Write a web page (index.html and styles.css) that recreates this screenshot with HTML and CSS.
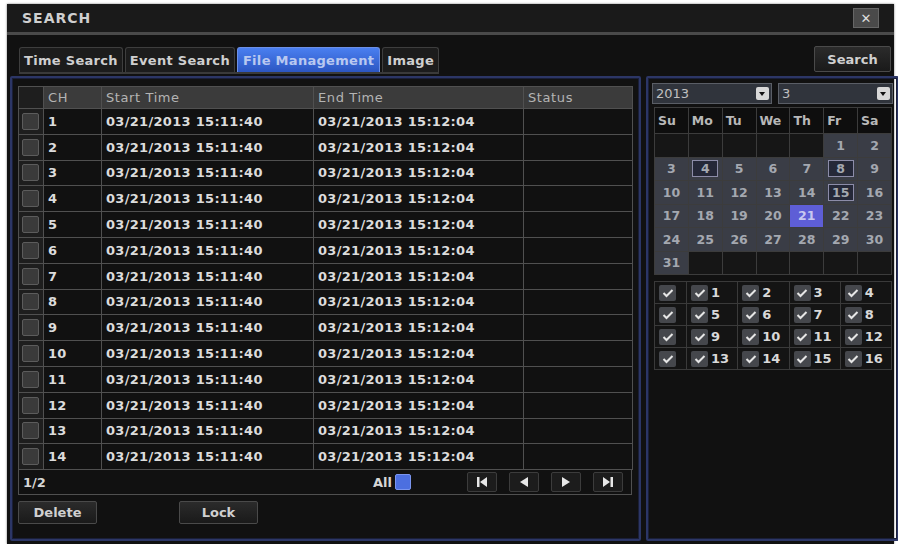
FILE: index.html
```html
<!DOCTYPE html>
<html lang="en">
<head>
    <meta charset="UTF-8">
    <title>SEARCH</title>
    <link rel="stylesheet" href="styles.css">
</head>
<body>
    <div class="window">
        <div class="titlebar">
            <span class="title">SEARCH</span>
            <span class="close">&#x2715;</span>
        </div>
        <div class="toolbar">
            <div class="tabs">
                <span class="tab">Time Search</span>
                <span class="tab">Event Search</span>
                <span class="tab active">File Management</span>
                <span class="tab">Image</span>
            </div>
            <span class="btn search-btn">Search</span>
        </div>
        <div class="main">
            <div class="panel left">
                <table class="files">
                    <thead>
                        <tr>
                            <th class="c-chk"></th>
                            <th class="c-ch">CH</th>
                            <th class="c-start">Start Time</th>
                            <th class="c-end">End Time</th>
                            <th class="c-status">Status</th>
                        </tr>
                    </thead>
                    <tbody id="rows"></tbody>
                </table>
                <div class="pager">
                    <span class="page">1/2</span>
                    <span class="all">All <span class="all-box"></span></span>
                    <div class="nav">
                        <span class="nav-btn"><svg width="14" height="12" viewBox="0 0 14 12"><rect x="2" y="1" width="2.5" height="10" fill="#e8e8e8"/><path d="M12 1 L5 6 L12 11 Z" fill="#e8e8e8"/></svg></span>
                        <span class="nav-btn"><svg width="14" height="12" viewBox="0 0 14 12"><path d="M11 1 L3 6 L11 11 Z" fill="#e8e8e8"/></svg></span>
                        <span class="nav-btn"><svg width="14" height="12" viewBox="0 0 14 12"><path d="M3 1 L11 6 L3 11 Z" fill="#e8e8e8"/></svg></span>
                        <span class="nav-btn"><svg width="14" height="12" viewBox="0 0 14 12"><path d="M2 1 L9 6 L2 11 Z" fill="#e8e8e8"/><rect x="9.5" y="1" width="2.5" height="10" fill="#e8e8e8"/></svg></span>
                    </div>
                </div>
                <div class="actions">
                    <span class="btn action">Delete</span>
                    <span class="btn action">Lock</span>
                </div>
            </div>
            <div class="panel right">
                <div class="selects">
                    <div class="select year"><span>2013</span><span class="drop"></span></div>
                    <div class="select month"><span>3</span><span class="drop"></span></div>
                </div>
                <table class="calendar">
                    <thead>
                        <tr><th>Su</th><th>Mo</th><th>Tu</th><th>We</th><th>Th</th><th>Fr</th><th>Sa</th></tr>
                    </thead>
                    <tbody id="days"></tbody>
                </table>
                <table class="channels">
                    <tbody id="channels"></tbody>
                </table>
            </div>
        </div>
    </div>
    <script>
        // file list rows
        const rows = document.getElementById('rows');
        for (let i = 1; i <= 14; i++) {
            const tr = document.createElement('tr');
            tr.innerHTML = '<td class="c-chk"><span class="box"></span></td>' +
                '<td>' + i + '</td>' +
                '<td>03/21/2013 15:11:40</td>' +
                '<td>03/21/2013 15:12:04</td>' +
                '<td></td>';
            rows.appendChild(tr);
        }

        // March 2013 starts on a Friday
        const days = document.getElementById('days');
        const marked = [4, 8, 15];
        let day = 1 - 5;
        for (let w = 0; w < 6; w++) {
            const tr = document.createElement('tr');
            for (let d = 0; d < 7; d++, day++) {
                const td = document.createElement('td');
                if (day >= 1 && day <= 31) {
                    td.className = 'day';
                    if (day === 21) {
                        td.className += ' today';
                        td.textContent = day;
                    } else if (marked.includes(day)) {
                        td.innerHTML = '<span class="mark">' + day + '</span>';
                    } else {
                        td.textContent = day;
                    }
                }
                tr.appendChild(td);
            }
            days.appendChild(tr);
        }

        // channel checkboxes
        const channels = document.getElementById('channels');
        const tick = '<span class="tick"><svg width="12" height="10" viewBox="0 0 12 10"><path d="M1.5 5 L4.5 8 L10.5 2" fill="none" stroke="#e6e6e6" stroke-width="2"/></svg></span>';
        for (let r = 0; r < 4; r++) {
            const tr = document.createElement('tr');
            let html = '<td class="row-all">' + tick + '</td>';
            for (let c = 1; c <= 4; c++) {
                html += '<td>' + tick + '<span class="num">' + (r * 4 + c) + '</span></td>';
            }
            tr.innerHTML = html;
            channels.appendChild(tr);
        }
    </script>
</body>
</html>
```

FILE: styles.css
```css
* {
    box-sizing: border-box;
}
body {
    margin: 0;
    background: #fff;
    font-family: 'DejaVu Sans', Verdana, sans-serif;
    font-size: 13px;
    color: #d6d6d6;
}
.window {
    margin: 4px 0 0 7px;
    width: 887px;
    height: 540px;
    background: #111;
    display: flex;
    flex-direction: column;
    box-shadow: 0 0 2px #777;
}
.titlebar {
    height: 31px;
    background: #1a1a1a;
    display: flex;
    align-items: center;
    justify-content: space-between;
    padding: 0 15px 0 15px;
    border-bottom: 3px solid #4a4a4a;
}
.title {
    font-weight: bold;
    font-size: 14px;
    letter-spacing: 1px;
    color: #cfcfcf;
}
.close {
    width: 26px;
    height: 20px;
    background: #4a4a4a;
    border: 1px solid #666;
    color: #ddd;
    font-size: 13px;
    font-weight: bold;
    display: flex;
    align-items: center;
    justify-content: center;
}
.toolbar {
    height: 39px;
    display: flex;
    align-items: flex-end;
    justify-content: space-between;
    padding: 0 3px 0 12px;
}
.tabs {
    display: flex;
    gap: 2px;
    height: 27px;
    border-bottom: 2px solid #3a3a3a;
}
.tab {
    padding: 0 4px;
    height: 25px;
    display: flex;
    align-items: center;
    font-weight: bold;
    font-size: 13px;
    letter-spacing: 0.3px;
    color: #cfcfcf;
    background: #1c1c1c;
    border: 1px solid #3e3e3e;
    border-bottom: none;
    border-radius: 3px 3px 0 0;
}
.tab.active {
    background: linear-gradient(#4a7ff0, #2c56c2);
    color: #b9c8f0;
    border-color: #6c8fe6;
    padding: 0 5px;
}
.btn {
    display: inline-flex;
    align-items: center;
    justify-content: center;
    background: linear-gradient(#2b2b2b, #1a1a1a);
    border: 1px solid #4a4a4a;
    border-radius: 2px;
    font-weight: bold;
    color: #d0d0d0;
}
.search-btn {
    width: 77px;
    height: 26px;
    margin-bottom: 2px;
}
.main {
    flex: 1;
    display: flex;
    gap: 5px;
    padding: 2px 3px 3px 3px;
}
.panel {
    border: 2px solid #2c3666;
    border-radius: 2px;
    box-shadow: inset 0 0 0 1px #1a1f38;
}
.panel.left {
    width: 631px;
    padding: 8px 6px 0 6px;
}
.panel.right {
    flex: 1;
    padding: 5px 3px 0 3px;
}
.files {
    border-collapse: collapse;
    width: 614px;
    table-layout: fixed;
}
.files th, .files td {
    border: 1px solid #505050;
    text-align: left;
    padding: 0 0 0 4px;
    white-space: nowrap;
}
.files th {
    height: 22px;
    background: #3b3b3b;
    font-weight: normal;
    color: #b4b4b4;
    font-size: 13px;
    letter-spacing: 0.6px;
}
.files td {
    height: 25.8px;
    font-weight: bold;
    letter-spacing: 0.3px;
    color: #dcdcdc;
}
.c-chk { width: 25px; }
.c-ch { width: 58px; }
.c-start { width: 212px; }
.c-end { width: 210px; }
.c-status { width: 109px; }
.files .c-chk {
    padding: 0 0 0 3px;
    background: #1e1e1e;
}
.box {
    display: block;
    width: 17px;
    height: 17px;
    background: #3a3a3a;
    border: 1px solid #5c5c5c;
    border-radius: 2px;
}
.pager {
    width: 614px;
    height: 25px;
    border: 1px solid #505050;
    border-top: none;
    display: flex;
    align-items: center;
    padding-left: 4px;
    font-weight: bold;
}
.page {
    width: 350px;
}
.all {
    display: flex;
    align-items: center;
    gap: 3px;
    width: 94px;
}
.all-box {
    width: 16px;
    height: 16px;
    background: #4c6fe0;
    border: 1px solid #7b95ee;
    border-radius: 2px;
}
.nav {
    display: flex;
    gap: 12px;
}
.nav-btn {
    width: 30px;
    height: 20px;
    display: flex;
    align-items: center;
    justify-content: center;
    background: #1c1c1c;
    border: 1px solid #3c3c3c;
    border-radius: 2px;
}
.actions {
    display: flex;
    gap: 82px;
    margin-top: 6px;
}
.action {
    width: 79px;
    height: 23px;
}
.selects {
    display: flex;
    gap: 6px;
    padding: 0 1px;
}
.select {
    height: 21px;
    display: flex;
    align-items: center;
    justify-content: space-between;
    background: #30343c;
    border: 1px solid #5a5e66;
    padding: 0 2px 0 3px;
    color: #c0c0c0;
}
.year { width: 120px; }
.month { width: 115px; }
.drop {
    width: 13px;
    height: 13px;
    background: #d8d8d8;
    border-radius: 2px;
    position: relative;
}
.drop::after {
    content: '';
    position: absolute;
    left: 3px;
    top: 5px;
    border-left: 3.5px solid transparent;
    border-right: 3.5px solid transparent;
    border-top: 4px solid #111;
}
.calendar {
    border-collapse: collapse;
    width: 238px;
    margin: 3px 0 0 3px;
    table-layout: fixed;
}
.calendar th, .calendar td {
    border: 1px solid #3c3c3c;
    text-align: center;
    padding: 0;
}
.calendar th {
    height: 26px;
    background: #0e0e0e;
    color: #b8b8b8;
    font-weight: bold;
    font-size: 12.5px;
    text-align: left;
    padding-left: 3px;
}
.calendar td {
    height: 23.5px;
    background: #161616;
    color: #a4a8b0;
    font-weight: bold;
    font-size: 12.5px;
}
.calendar td.day {
    background: #3a3d46;
}
.calendar td.today {
    background: #5e5ed6;
    color: #c8c8f0;
}
.mark {
    display: inline-block;
    width: 26px;
    height: 17px;
    line-height: 15px;
    border: 1px solid #8c8ca8;
    background: #252838;
}
.channels {
    border-collapse: collapse;
    width: 238px;
    margin: 6px 0 0 3px;
    table-layout: fixed;
}
.channels td {
    height: 22px;
    border: 1px solid #3a3a3a;
    background: #141414;
    padding: 0 0 0 4px;
    font-weight: bold;
    font-size: 13px;
    color: #d8d8d8;
    white-space: nowrap;
}
.channels td.row-all {
    width: 32px;
}
.tick {
    display: inline-flex;
    align-items: center;
    justify-content: center;
    width: 17px;
    height: 16px;
    background: #45474c;
    border-radius: 2px;
    vertical-align: middle;
}
.num {
    margin-left: 3px;
    vertical-align: middle;
}
```
